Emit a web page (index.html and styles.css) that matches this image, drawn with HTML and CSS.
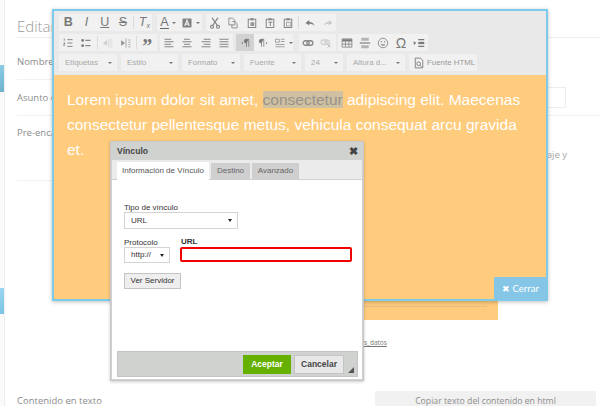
FILE: index.html
```html
<!DOCTYPE html>
<html lang="es">
<head>
<meta charset="utf-8">
<title>Editar</title>
<link rel="stylesheet" href="styles.css">
</head>
<body>
<div class="page">
  <aside class="sidebar">
    <div class="side-item side-active"></div>
    <div class="side-item side-active second"></div>
  </aside>
  <main class="main">
    <h1 class="title">Editar</h1>
    <div class="row row-name">Nombre</div>
    <div class="row row-subject">Asunto d<span class="subject-input"></span></div>
    <div class="row row-pre">Pre-enca<span class="pre-note">saje y</span></div>
    <div class="content-block"><div class="dotted"></div></div>
    <div class="data-link"><a>s_datos</a></div>
    <div class="row-bottom"><span>Contenido en texto</span><span class="copy-btn">Copiar texto del contenido en html</span></div>
  </main>

  <section class="editor">
    <div class="toolbar">
      <div class="tb-row">
        <div class="grp g1">
          <span class="btn t b">B</span><span class="btn t i">I</span><span class="btn t u">U</span><span class="btn t s">S</span><span class="sep"></span>
          <span class="btn t i">T<sub class="x">x</sub></span>
        </div>
        <div class="grp g2">
          <span class="btn t wide"><u class="col">A</u><i class="car"></i></span>
          <span class="btn wide"><svg viewBox="0 0 16 16" class="ic"><rect x="2" y="2" width="12" height="12" rx="1" fill="#6e6e6e"/><path d="M5 12 8 4l3 8M6 9.500h4" stroke="#eee" stroke-width="1.500" fill="none"/></svg><i class="car"></i></span>
        </div>
        <div class="grp g3">
          <span class="btn"><svg viewBox="0 0 16 16" class="ic"><path d="M4 1l7 10M12 1 5 11" stroke="#666" stroke-width="1.600" fill="none"/><circle cx="4" cy="13" r="2" fill="none" stroke="#666" stroke-width="1.400"/><circle cx="12" cy="13" r="2" fill="none" stroke="#666" stroke-width="1.400"/></svg></span>
          <span class="btn"><svg viewBox="0 0 16 16" class="ic"><path d="M2.500 1.500h5l3 3v6h-8zM7 6h3.500l3 3v5.500h-7V10" fill="#eee" stroke="#666"/></svg></span>
          <span class="btn"><svg viewBox="0 0 16 16" class="ic"><path d="M3 3h10v11H3z" fill="none" stroke="#777" stroke-width="1.400"/><rect x="6" y="1.500" width="4" height="3" fill="#777"/><rect x="6" y="7" width="5" height="5" fill="#888"/></svg></span>
          <span class="btn"><svg viewBox="0 0 16 16" class="ic"><path d="M3 3h10v11H3z" fill="none" stroke="#777" stroke-width="1.400"/><rect x="6" y="1.500" width="4" height="3" fill="#777"/><path d="M6 7h5M8.500 7v5" stroke="#777" stroke-width="1.400"/></svg></span>
          <span class="btn"><svg viewBox="0 0 16 16" class="ic"><path d="M3 3h10v11H3z" fill="none" stroke="#777" stroke-width="1.400"/><rect x="6" y="1.500" width="4" height="3" fill="#777"/><rect x="6" y="7" width="5" height="5" fill="none" stroke="#888"/></svg></span>
          <span class="sep"></span>
          <span class="btn"><svg viewBox="0 0 16 16" class="ic"><path d="M2 8l5-4v2.500c4 0 6 2 7 5-2-2-4-2.500-7-2.500V11z" fill="#666"/></svg></span>
          <span class="btn"><svg viewBox="0 0 16 16" class="ic"><path d="M14 8 9 4v2.500c-4 0-6 2-7 5 2-2 4-2.500 7-2.500V11z" fill="#c4c4c4"/></svg></span>
        </div>
      </div>
      <div class="tb-row">
        <div class="grp g4">
          <span class="btn"><svg viewBox="0 0 16 16" class="ic"><path d="M7 3.500h7M7 8h7M7 12.500h7" stroke="#777" stroke-width="1.300"/><path d="M3 2v3M2 8h2l-2 3h2" stroke="#555" fill="none"/></svg></span>
          <span class="btn"><svg viewBox="0 0 16 16" class="ic"><path d="M7 4.500h7M7 11.500h7" stroke="#777" stroke-width="1.500"/><circle cx="3.500" cy="4.500" r="1.800" fill="#666"/><circle cx="3.500" cy="11.500" r="1.800" fill="#666"/></svg></span>
          <span class="sep"></span>
          <span class="btn"><svg viewBox="0 0 16 16" class="ic"><path d="M9 2v12M11 4h3M11 7h3M11 10h3M11 13h3M2 8l4-3v6z" stroke="#c8c8c8" fill="#c8c8c8"/></svg></span>
          <span class="btn"><svg viewBox="0 0 16 16" class="ic"><path d="M8 2v12M11 4h3M11 7h3M11 10h3M11 13h3M6 8 2 5v6z" stroke="#888" fill="#888"/></svg></span>
          <span class="sep"></span>
          <span class="btn q">”</span>
        </div>
        <div class="grp g5">
          <span class="btn"><svg viewBox="0 0 16 16" class="ic"><path d="M2 3h9M2 6.300h12M2 9.700h9M2 13h12" stroke="#666" stroke-width="1.200"/></svg></span>
          <span class="btn"><svg viewBox="0 0 16 16" class="ic"><path d="M4 3h8M2 6.300h12M4 9.700h8M2 13h12" stroke="#666" stroke-width="1.200"/></svg></span>
          <span class="btn"><svg viewBox="0 0 16 16" class="ic"><path d="M5 3h9M2 6.300h12M5 9.700h9M2 13h12" stroke="#666" stroke-width="1.200"/></svg></span>
          <span class="btn"><svg viewBox="0 0 16 16" class="ic"><path d="M2 3h12M2 6.300h12M2 9.700h12M2 13h12" stroke="#666" stroke-width="1.200"/></svg></span>
        </div>
        <div class="grp g6">
          <span class="btn on"><svg viewBox="0 0 16 16" class="ic"><path d="M10 3v10M13 3v10M13 3H9.500a2.500 2.500 0 0 0 0 5H10" stroke="#666" fill="#666"/><path d="M3 8l2-1.500v3z" fill="#666"/></svg></span>
          <span class="btn"><svg viewBox="0 0 16 16" class="ic"><path d="M6 3v10M9 3v10M9 3H5.500a2.500 2.500 0 0 0 0 5H6" stroke="#666" fill="#666"/><path d="M14 8l-2-1.500v3z" fill="#666"/></svg></span>
          <span class="btn wide"><svg viewBox="0 0 16 16" class="ic"><path d="M2 3h5v4H2zM9 3h5M9 6h5M2 10h12M2 13h12" stroke="#777" fill="none"/></svg><i class="car"></i></span>
        </div>
        <div class="grp g7">
          <span class="btn"><svg viewBox="0 0 16 16" class="ic"><rect x="1.500" y="5" width="8" height="6" rx="3" fill="none" stroke="#777" stroke-width="1.700"/><rect x="6.500" y="5" width="8" height="6" rx="3" fill="none" stroke="#777" stroke-width="1.700"/></svg></span>
          <span class="btn"><svg viewBox="0 0 16 16" class="ic"><rect x="1.500" y="4" width="8" height="6" rx="3" fill="none" stroke="#ccc" stroke-width="1.700"/><rect x="6.500" y="4" width="6" height="6" rx="3" fill="none" stroke="#ccc" stroke-width="1.700"/><path d="M10 10l4 4M14 10l-4 4" stroke="#aaa"/></svg></span>
        </div>
        <div class="grp g8">
          <span class="btn"><svg viewBox="0 0 16 16" class="ic"><path d="M1.500 2.500h13v11h-13z" fill="none" stroke="#666"/><path d="M1.500 3h13v3h-13z" fill="#666"/><path d="M1.500 9.500h13M6 6v7M10.500 6v7" stroke="#666"/></svg></span>
          <span class="btn"><svg viewBox="0 0 16 16" class="ic"><path d="M3 1h10v4H3zM3 11h10v4H3z" fill="#aaa"/><path d="M1 8h14" stroke="#666" stroke-width="1.500"/></svg></span>
          <span class="btn"><svg viewBox="0 0 16 16" class="ic"><circle cx="8" cy="8" r="6.300" fill="none" stroke="#777" stroke-width="1.200"/><circle cx="5.800" cy="6.300" r="1" fill="#777"/><circle cx="10.200" cy="6.300" r="1" fill="#777"/><path d="M4.800 9.500a3.500 3.500 0 0 0 6.400 0z" fill="#777"/></svg></span>
          <span class="btn omega">Ω</span>
          <span class="btn"><svg viewBox="0 0 16 16" class="ic"><path d="M7 3.500h8M7 12.500h8" stroke="#666" stroke-width="1.700"/><path d="M7 6.500h8v3H7z" fill="#666"/><path d="M1 5.500 4.500 8 1 10.500z" fill="#666"/></svg></span>
        </div>
      </div>
      <div class="tb-row">
        <div class="combo c-a">Etiquetas<i class="car"></i></div>
        <div class="combo c-b">Estilo<i class="car"></i></div>
        <div class="combo c-c">Formato<i class="car"></i></div>
        <div class="combo c-d">Fuente<i class="car"></i></div>
        <div class="combo c-e">24<i class="car"></i></div>
        <div class="combo c-f">Altura d...<i class="car"></i></div>
        <div class="combo c-g"><svg viewBox="0 0 16 16" class="ic"><path d="M3 1.500h7l3 3v10H3z" fill="none" stroke="#666" stroke-width="1.200"/><circle cx="7.500" cy="9" r="2.500" fill="none" stroke="#666" stroke-width="1.200"/><path d="M9.500 11l2 2" stroke="#666" stroke-width="1.200"/></svg>Fuente HTML</div>
      </div>
    </div>
    <div class="editable">
      <p>Lorem ipsum dolor sit amet, <span class="hl">consectetur</span> adipiscing elit. Maecenas consectetur pellentesque metus, vehicula consequat arcu gravida et.</p>
    </div>
    <button class="close-editor"><span class="x-mark">✖</span> Cerrar</button>
  </section>

  <section class="dialog">
    <header class="dlg-title"><span>Vínculo</span><span class="dlg-close">✖</span></header>
    <nav class="tabs">
      <span class="tab active">Información de Vínculo</span>
      <span class="tab t-dest">Destino</span>
      <span class="tab t-adv">Avanzado</span>
    </nav>
    <div class="dlg-body">
      <label class="fld-label">Tipo de vínculo</label>
      <div class="select sel-type">URL<i class="tri"></i></div>
      <div class="url-row">
        <div class="proto">
          <label class="fld-label">Protocolo</label>
          <div class="select sel-proto">http://<i class="tri"></i></div>
        </div>
        <div class="url">
          <label class="fld-label url-label">URL</label>
          <div class="url-input"></div>
        </div>
      </div>
      <span class="ver-btn">Ver Servidor</span>
    </div>
    <footer class="dlg-foot">
      <span class="ok">Aceptar</span>
      <span class="cancel">Cancelar</span>
      <i class="grip"></i>
    </footer>
  </section>
</div>
</body>
</html>
```
FILE: styles.css
```css
* { box-sizing: border-box; }
html, body { margin: 0; padding: 0; }
body { width: 600px; height: 406px; overflow: hidden; background: #fff; font-family: "Liberation Sans", sans-serif; }
.page { position: relative; width: 600px; height: 406px; overflow: hidden; display: flex; }

.sidebar { width: 5px; flex: none; background: #fafafa; border-right: 1px solid #eee; padding-top: 65px; }
.side-item { height: 27px; background: linear-gradient(#8ccbe6, #6fb2cc); }
.side-item.second { margin-top: 196px; background: linear-gradient(#9ad6f0, #7cc4e6); height: 26px; }

.main { flex: 1; padding-left: 12px; font-family: "Open Sans", sans-serif; color: #8d8d8d; font-size: 9.500px; }
.title { margin: 0; height: 38px; padding-top: 14px; font-size: 15px; line-height: 24px; font-weight: 300; color: #9a9a9a; border-bottom: 1px solid #eee; }
.row { border-bottom: 1px solid #f1f1f1; position: relative; }
.row-name { height: 42px; padding-top: 16px; line-height: 16px; margin-right: 80px; }
.row-subject { height: 36px; padding-top: 10px; line-height: 16px; display: flex; justify-content: space-between; padding-right: 34px; }
.subject-input { display: block; width: 30px; height: 21px; margin-top: -3px; border: 1px solid #eee; border-left: 0; }
.row-pre { height: 65px; padding-top: 9px; line-height: 16px; display: flex; justify-content: space-between; padding-right: 33px; margin-right: 80px; }
.pre-note { margin-top: 22px; margin-right: -80px; color: #a5a5a5; }
.content-block { margin: 120px 0 0 93px; width: 388px; height: 19px; background: #ffcb7c; padding: 5px 12px 0 0; }
.dotted { border-top: 1px dotted #c9b48e; }
.data-link { margin: 18px 0 0 347px; font-size: 6.500px; line-height: 10px; text-decoration: underline; color: #777; height: 10px; }
.row-bottom { margin-top: 43px; display: flex; justify-content: space-between; padding-right: 4px; line-height: 16px; height: 20px; }
.row-bottom > span:first-child { padding-top: 2px; }
.copy-btn { width: 221px; height: 30px; background: #f1f1f1; text-align: center; font-size: 8.700px; padding-top: 2px; }

.editor { position: absolute; left: 52px; top: 9px; width: 496px; height: 292px; border: 2px solid #7ccbea; box-shadow: 0 1px 4px rgba(0,0,0,.25); display: flex; flex-direction: column; background: #ffcb7c; }
.toolbar { height: 64px; flex: none; background: #e9e9e9; padding: 3px 0 0 5px; display: flex; flex-direction: column; gap: 3px; }
.tb-row { display: flex; gap: 4px; height: 17px; }
.grp { background: #f1f1f1; display: flex; align-items: center; height: 17px; }
.g1 { width: 93px; }
.g2 { width: 45px; margin-left: 1px; }
.g3 { width: 130px; }
.g4 { width: 98px; }
.g5 { width: 73px; margin-left: -1px; }
.g6 { width: 57px; margin-left: -1px; }
.g7 { width: 37px; margin-left: 2px; }
.g8 { width: 90px; margin-left: -2px; }
.btn { width: 18.300px; height: 17px; flex: none; display: flex; align-items: center; justify-content: center; color: #777; font-size: 12.500px; line-height: 1; }
.g6 .btn, .g8 .btn { width: 18px; }
.btn.on { background: #d2d2d2; }
.btn.wide { width: 22px; }
.t { font-family: "Liberation Sans", sans-serif; }
.b { font-weight: 700; }
.i { font-style: italic; }
.u { text-decoration: underline; }
.s { text-decoration: line-through; }
.x { font-size: 7px; vertical-align: baseline; margin-top: 5px; }
.col { text-decoration: none; border-bottom: 1.500px solid #666; line-height: 11px; }
.q { font: 700 20px/1 "Liberation Serif", serif; padding-top: 7px; }
.omega { font-size: 14px; }
.sep { width: 1px; height: 13px; background: #dcdcdc; flex: none; margin: 0 1px; }
.ic { width: 12px; height: 12px; display: block; flex: none; opacity: .85; }
.car { display: inline-block; width: 0; height: 0; border: 2px solid transparent; border-top: 2.500px solid #777; border-bottom: 0; margin-left: 3px; }
.combo { height: 17px; background: #f1f1f1; display: flex; align-items: center; justify-content: space-between; padding: 0 5px 0 6px; font-size: 7.900px; color: #a8a8a8; flex: none; }
.c-a { width: 58px; }
.c-b { width: 57px; }
.c-c { width: 58px; }
.c-d { width: 57px; }
.c-e { width: 38px; }
.c-f { width: 58px; }
.c-g { width: 68px; padding: 0 0 0 4px; gap: 2px; justify-content: flex-start; white-space: nowrap; color: #999; }
.editable { flex: 1; padding: 12px 19px 12px 13px; color: #fff; font-family: "Liberation Sans", sans-serif; font-size: 15.500px; line-height: 25px; }
.editable p { margin: 0; }
.hl { background: #cfc0a2; color: #97938a; }
.close-editor { position: absolute; right: -1px; bottom: -1px; width: 53px; height: 23px; border: 0; padding: 0; background: #85c6e6; color: #fff; font-family: "Lato", sans-serif; font-size: 9.500px; }
.x-mark { font-size: 9px; }

.dialog { position: absolute; left: 110px; top: 141px; width: 254px; height: 240px; background: #fff; border: 1px solid #c7c7c7; outline: 1px solid #d2d2d2; outline-offset: -2px; box-shadow: 0 1px 3px rgba(0,0,0,.2); display: flex; flex-direction: column; font-family: "Liberation Sans", sans-serif; color: #444; font-size: 8px; }
.dlg-title { height: 18px; flex: none; background: #d0d2d0; display: flex; justify-content: space-between; align-items: center; padding: 0 5px 0 6px; font-weight: 700; font-size: 8.600px; }
.dlg-close { font-size: 11px; color: #444; }
.tabs { height: 20px; flex: none; background: #ebebeb; border-bottom: 1px solid #d0d0d0; display: flex; align-items: flex-end; padding-left: 6px; gap: 2px; }
.tab { height: 16px; background: #cfcfcf; padding-top: 3px; text-align: center; color: #666; }
.tab.active { width: 92px; height: 18px; background: #fff; margin-bottom: -1px; padding-top: 4px; color: #555; }
.t-dest { width: 39px; }
.t-adv { width: 47px; }
.dlg-body { flex: 1; padding: 23px 0 0 13px; }
.fld-label { display: block; line-height: 9px; color: #333; height: 9px; }
.select { position: relative; height: 17px; background: #fff; border: 1px solid #d3d3d3; line-height: 15px; padding-left: 6px; color: #333; }
.sel-type { width: 114px; }
.sel-proto { width: 46px; height: 16px; line-height: 14px; }
.tri { position: absolute; right: 5px; top: 6px; width: 0; height: 0; border: 2px solid transparent; border-top: 3.500px solid #222; border-bottom: 0; }
.url-row { display: flex; margin-top: 9px; }
.proto { width: 56px; }
.url-label { font-weight: 700; margin-left: 1px; margin-top: -1px; height: 10px; }
.url-input { width: 172px; height: 15px; border: 2px solid #f00000; border-radius: 2px; background: #fff; }
.ver-btn { display: block; width: 57px; height: 16px; margin-top: 10px; background: #eee; border: 1px solid #c4c4c4; text-align: center; line-height: 14px; color: #333; }
.dlg-foot { position: relative; height: 26px; margin: 0 5px 3px 6px; flex: none; background: #d0d2d0; border: 1px solid #c4c4c4; display: flex; justify-content: flex-end; align-items: center; gap: 3px; padding-right: 13px; font-weight: 700; font-size: 8.500px; }
.ok { width: 48px; height: 19px; background: #65b000; color: #fff; text-align: center; line-height: 19px; }
.cancel { width: 50px; height: 19px; background: #e8e8e8; border: 1px solid #c4c4c4; text-align: center; line-height: 17px; color: #444; }
.grip { position: absolute; right: 3px; bottom: 3px; width: 0; height: 0; border-left: 6px solid transparent; border-bottom: 6px solid #555; }
```
